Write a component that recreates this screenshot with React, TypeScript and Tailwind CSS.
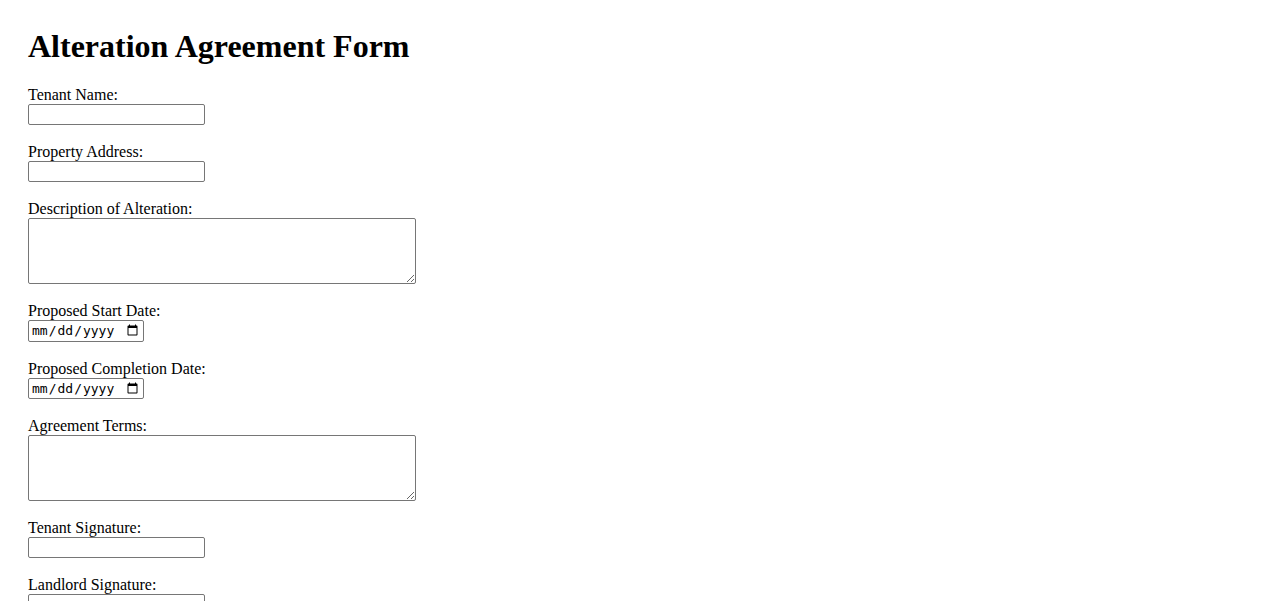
import React from "react";

const textInput =
  "block w-[177px] h-[21px] border border-[#767676] rounded-[2px] px-[2px] py-[1px] bg-white text-[13.33px] font-['Liberation_Sans',sans-serif]";
const dateInput =
  "block w-[116px] h-[21.5px] border border-[#767676] rounded-[2px] pl-[2px] pr-[2px] py-0 bg-white text-[13px] text-black font-['DejaVu_Sans_Mono',monospace]";
const textArea =
  "block w-[388px] h-[66px] border border-[#767676] rounded-[2px] p-[2px] bg-white text-[13.33px] font-['Liberation_Mono',monospace]";

function Field({ label, children }: { label: string; children: React.ReactNode }) {
  return (
    <div className="flex flex-col">
      <label className="block h-[18px] leading-[18px] text-[16px]">{label}</label>
      {children}
    </div>
  );
}

export default function App() {
  return (
    <div className="min-h-screen bg-white text-black font-['Liberation_Serif','Times_New_Roman',serif] pt-[28px] px-[28px] pb-[28px]">
      <h1 className="text-[32px] font-bold leading-[37px] mb-[21px]">Alteration Agreement Form</h1>
      <form className="flex flex-col gap-[18px]">
        <Field label="Tenant Name:">
          <input type="text" className={textInput} />
        </Field>
        <Field label="Property Address:">
          <input type="text" className={textInput} />
        </Field>
        <Field label="Description of Alteration:">
          <textarea className={textArea} />
        </Field>
        <Field label="Proposed Start Date:">
          <input type="date" className={dateInput} />
        </Field>
        <Field label="Proposed Completion Date:">
          <input type="date" className={dateInput} />
        </Field>
        <Field label="Agreement Terms:">
          <textarea className={textArea} />
        </Field>
        <Field label="Tenant Signature:">
          <input type="text" className={textInput} />
        </Field>
        <Field label="Landlord Signature:">
          <input type="text" className={textInput} />
        </Field>
      </form>
    </div>
  );
}
